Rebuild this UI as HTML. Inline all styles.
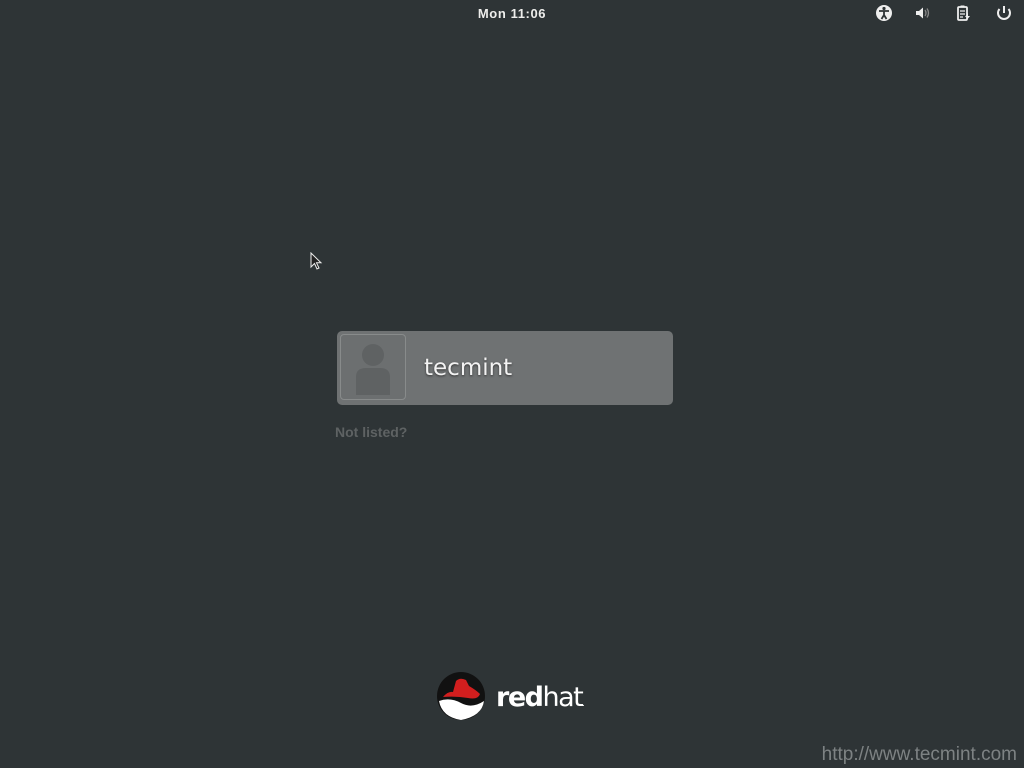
<!DOCTYPE html>
<html><head><meta charset="utf-8"><style>
html,body{margin:0;padding:0;width:1024px;height:768px;overflow:hidden;background:#2e3436;font-family:"Liberation Sans","DejaVu Sans",sans-serif;}
.clock{position:absolute;left:0;width:1024px;top:6px;text-align:center;color:#eeeeec;font-size:13px;font-weight:bold;letter-spacing:0.6px}
.card{position:absolute;left:337px;top:331px;width:336px;height:74px;background:#6f7273;border-radius:5px;}
.avatar{position:absolute;left:3px;top:3px;width:66px;height:66px;border:1px solid #888b8b;border-radius:4px;box-sizing:border-box;background:#6c6f70}
.name{position:absolute;left:87px;top:24px;color:#f3f3f3;font-size:23px;font-family:"DejaVu Sans",sans-serif;text-shadow:0 1px 2px #333}
.nl{position:absolute;left:335px;top:424px;color:#5e6263;font-size:14px;font-weight:bold}
.rh{position:absolute;left:496px;top:682px;color:#fff;font-size:27px;font-family:"DejaVu Sans",sans-serif;letter-spacing:-1.5px}
.url{position:absolute;right:7px;top:744px;color:#7d8283;font-size:19px}
</style></head><body>
<div class="clock">Mon 11:06</div>
<svg style="position:absolute;left:874px;top:4px" width="140" height="20" viewBox="0 0 140 20">
<circle cx="10" cy="9" r="8" fill="#eee"/>
<circle cx="10" cy="4.5" r="1.6" fill="#2e3436"/>
<path d="M5 7 L15 7 M10 7 L10 11 L7.5 15 M10 11 L12.5 15" stroke="#2e3436" stroke-width="1.8" fill="none"/>
<path d="M42 7 L45 7 L49 3.5 L49 14.5 L45 11 L42 11Z" fill="#eee"/>
<path d="M51 6 Q53 9 51 12 M53 4.5 Q56 9 53 13.5" stroke="#888" stroke-width="1.3" fill="none"/>
<rect x="84" y="3" width="9" height="13" rx="1" fill="none" stroke="#eee" stroke-width="1.8"/>
<rect x="86.5" y="1.5" width="4" height="2" fill="#eee"/>
<path d="M86 7h5M86 10h5M86 13h3" stroke="#eee" stroke-width="1.2"/>
<path d="M94 9 L91 13 L93 13 L92 17 L96 12 L94 12Z" fill="#eee"/>
<path d="M125.5 5 A6 6 0 1 0 134.5 5" stroke="#eee" stroke-width="2" fill="none"/>
<path d="M130 2 V9" stroke="#eee" stroke-width="2"/>
</svg>
<svg style="position:absolute;left:310px;top:252px" width="14" height="20"><path d="M1 1 L1 15 L4.5 11.5 L7 17 L9 16 L6.5 10.8 L11 10.8Z" fill="#222" stroke="#eee" stroke-width="1"/></svg>
<div class="card"><div class="avatar"><svg width="64" height="64"><circle cx="32" cy="20" r="11" fill="#5f6263"/><path d="M15 60 L15 42 Q15 33 25 33 L39 33 Q49 33 49 42 L49 60Z" fill="#5f6263"/></svg></div><div class="name">tecmint</div></div>
<div class="nl">Not listed?</div>
<svg style="position:absolute;left:436px;top:671px" width="52" height="52" viewBox="0 0 52 52">
<circle cx="25" cy="25" r="24" fill="#111"/>
<path d="M3 30 Q14 26 25 32 Q36 38 48 30 Q46 45 25 49 Q6 46 3 30Z" fill="#fff"/>
<path d="M7 26 Q12 20 17 21 L20 10 Q24 6 30 9 L33 15 Q40 19 44 23 Q42 29 32 27 Q20 25 7 26Z" fill="#d21e1e"/>
</svg>
<div class="rh"><b>red</b>hat<span style="font-size:8px">.</span></div>
<div class="url">http://www.tecmint.com</div>
</body></html>
